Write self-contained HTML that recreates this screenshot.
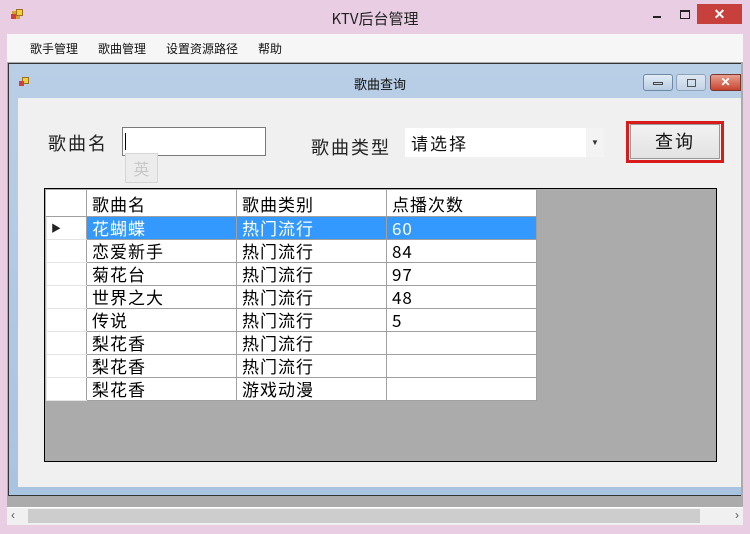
<!DOCTYPE html>
<html><head><meta charset="utf-8"><style>
*{margin:0;padding:0;box-sizing:border-box}
body{width:750px;height:534px;overflow:hidden;background:#e8cde3;font-family:"Liberation Sans","Noto Sans CJK SC",sans-serif;position:relative}
.a{position:absolute}
.cj{font-family:"Noto Sans CJK SC","WenQuanYi Zen Hei",sans-serif}
table{border-collapse:collapse;position:absolute;left:46px;top:190px}
td{height:23px;border:1px solid #a0a0a0;font-size:17px;line-height:20px;padding:0 0 0 5px;background:#fff;color:#000;white-space:nowrap;font-family:"WenQuanYi Zen Hei","Noto Sans CJK SC",sans-serif;letter-spacing:1px}
td.rh{width:40px;border-color:#e4e4e4 #a0a0a0 #e4e4e4 #e4e4e4;padding:0}
tr.h td{height:26px;border-color:#fff #a0a0a0 #a0a0a0 #fff}
tr.s td{background:#3399ff;color:#fff}
tr.s td.rh{background:#fff}
</style></head><body>
<!-- outer title -->
<div class="a" style="left:12px;top:11px;width:8px;height:8px;background:#d8a030"></div>
<div class="a" style="left:16px;top:9px;width:7px;height:7px;background:#f0d040;border:1px solid #a07020"></div>
<div class="a" style="left:11px;top:14px;width:5px;height:5px;background:#d04040"></div>
<div class="a cj" style="left:0;top:8px;width:750px;text-align:center;font-size:15px;color:#222">KTV后台管理</div>
<div class="a" style="left:653px;top:16px;width:8px;height:2px;background:#222"></div>
<div class="a" style="left:680px;top:10px;width:10px;height:9px;border:1px solid #222;border-top-width:2px"></div>
<div class="a" style="left:697px;top:4px;width:45px;height:20px;background:#c7403c;color:#fff;text-align:center;font-size:14px;line-height:20px;font-weight:bold">✕</div>
<!-- menu -->
<div class="a" style="left:7px;top:34px;width:736px;height:28px;background:#f7f6f7"></div>
<div class="a cj" style="left:30px;top:40px;font-size:12px;color:#111;word-spacing:0">歌手管理</div>
<div class="a cj" style="left:98px;top:40px;font-size:12px;color:#111">歌曲管理</div>
<div class="a cj" style="left:166px;top:40px;font-size:12px;color:#111">设置资源路径</div>
<div class="a cj" style="left:258px;top:40px;font-size:12px;color:#111">帮助</div>
<!-- mdi area -->
<div class="a" style="left:7px;top:62px;width:736px;height:446px;background:#ababab"></div>
<!-- child -->
<div class="a" style="left:8px;top:63px;width:733px;height:433px;background:linear-gradient(#b9cfe6,#a9c4e0);border:1px solid #333;border-right:none"></div>
<div class="a" style="left:22px;top:77px;width:7px;height:7px;background:#f0d040;border:1px solid #a07020"></div>
<div class="a" style="left:19px;top:81px;width:5px;height:5px;background:#d04040"></div>
<div class="a cj" style="left:0;top:74px;width:760px;text-align:center;font-size:13px;color:#111">歌曲查询</div>
<div class="a" style="left:643px;top:74px;width:30px;height:17px;border:1px solid #6f89a8;border-radius:3px;background:linear-gradient(#e2ecf6,#b8cde2)"><div style="margin:7px auto 0;width:10px;height:3px;border:1px solid #444"></div></div>
<div class="a" style="left:676px;top:74px;width:30px;height:17px;border:1px solid #8ea3bb;border-radius:3px;background:linear-gradient(#dfe8f2,#c3d3e4)"><div style="margin:4px auto 0;width:9px;height:8px;border:1px solid #555"></div></div>
<div class="a" style="left:710px;top:74px;width:31px;height:17px;border:1px solid #7a3530;border-radius:3px 0 0 3px;background:linear-gradient(#e8a090,#c8442e);color:#fff;font-size:12px;font-weight:bold;text-align:center;line-height:15px">✕</div>
<div class="a" style="left:18px;top:98px;width:723px;height:389px;background:#f0f0f0"></div>
<!-- form -->
<div class="a cj" style="left:48px;top:130px;font-size:18px;color:#222;letter-spacing:2px">歌曲名</div>
<div class="a" style="left:122px;top:127px;width:144px;height:29px;background:#fff;border:1px solid #7a7a7a"><div style="margin:5px 0 0 2px;width:1px;height:17px;background:#000"></div></div>
<div class="a cj" style="left:125px;top:153px;width:33px;height:30px;border:1px solid #d6d6d6;background:#ececec;color:#c8c8c8;font-size:16px;text-align:center;line-height:28px">英</div>
<div class="a cj" style="left:311px;top:134px;font-size:18px;color:#222;letter-spacing:2px">歌曲类型</div>
<div class="a" style="left:405px;top:128px;width:199px;height:29px;background:#fff"></div>
<div class="a" style="left:586px;top:128px;width:18px;height:29px;background:#f3f3f3;font-size:8px;text-align:center;line-height:29px;color:#333">▼</div>
<div class="a cj" style="left:411px;top:130px;font-size:17px;color:#111;letter-spacing:2px">请选择</div>
<div class="a" style="left:626px;top:121px;width:98px;height:42px;border:3px solid #d81c1c"></div>
<div class="a cj" style="left:630px;top:124px;width:90px;height:35px;border:1px solid #999;background:linear-gradient(#f2f2f2,#e2e2e2);font-size:18px;text-align:center;line-height:33px;color:#111;letter-spacing:2px">查询</div>
<!-- grid -->
<div class="a" style="left:44px;top:188px;width:673px;height:274px;background:#ababab;border:1px solid #000"></div>
<table>
<tr class="h"><td class="rh"></td><td style="width:150px">歌曲名</td><td style="width:150px">歌曲类别</td><td style="width:150px">点播次数</td></tr>
<tr class="s"><td class="rh" style="font-size:10px;padding-left:4px;color:#222">▶</td><td>花蝴蝶</td><td>热门流行</td><td>60</td></tr>
<tr><td class="rh"></td><td>恋爱新手</td><td>热门流行</td><td>84</td></tr>
<tr><td class="rh"></td><td>菊花台</td><td>热门流行</td><td>97</td></tr>
<tr><td class="rh"></td><td>世界之大</td><td>热门流行</td><td>48</td></tr>
<tr><td class="rh"></td><td>传说</td><td>热门流行</td><td>5</td></tr>
<tr><td class="rh"></td><td>梨花香</td><td>热门流行</td><td></td></tr>
<tr><td class="rh"></td><td>梨花香</td><td>热门流行</td><td></td></tr>
<tr><td class="rh"></td><td>梨花香</td><td>游戏动漫</td><td></td></tr>
</table>
<!-- scrollbar -->
<div class="a" style="left:7px;top:507px;width:736px;height:18px;background:#f0f0f0;border-top:1px solid #fff"></div>
<div class="a" style="left:28px;top:509px;width:672px;height:14px;background:#cdcdcd"></div>
<div class="a" style="left:11px;top:508px;font-size:12px;color:#555">‹</div>
<div class="a" style="left:735px;top:508px;font-size:12px;color:#555">›</div>
</body></html>
